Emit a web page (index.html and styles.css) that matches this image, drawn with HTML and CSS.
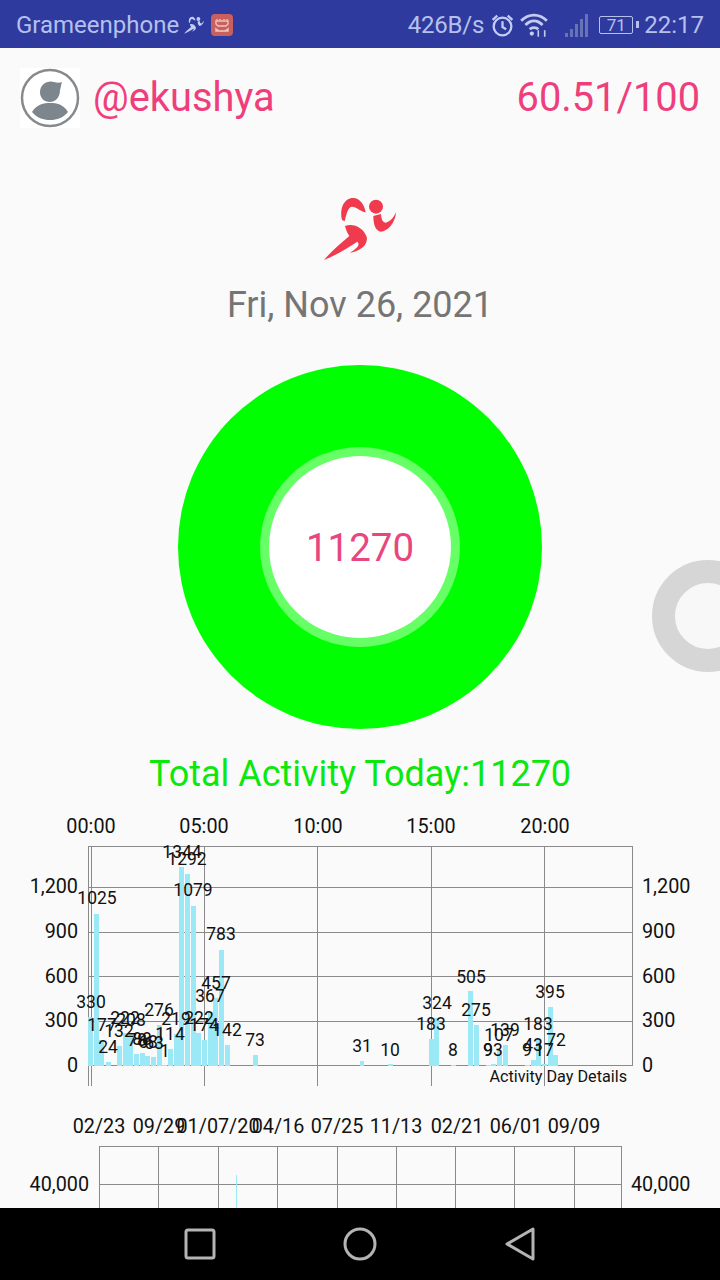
FILE: index.html
```html
<!DOCTYPE html>
<html lang="en">
<head>
<meta charset="utf-8">
<title>Activity</title>
<link rel="stylesheet" href="styles.css">
</head>
<body>
<div class="phone">
  <header class="statusbar">
    <div class="status-left">
      <span>Grameenphone</span>
      <svg class="ic-run" viewBox="60 45 240 200"><path d="M126 120C118 85 132 54 160 54C180 54 194 76 197 97C180 94 170 80 156 80C145 81 140 98 134 124Z"/><circle cx="228" cy="80" r="21"/><path d="M220 108L243 102C244 118 248 128 258 128C270 125 282 112 288 97C287 125 265 155 242 155C225 152 220 130 220 108Z"/><path d="M135 138C158 128 190 142 200 170C205 192 185 212 150 218C170 205 182 195 172 185C140 205 105 228 72 240C95 212 125 188 148 168C142 160 138 150 135 138Z"/></svg>
      <svg class="ic-app" viewBox="0 0 22 22"><rect width="22" height="22" rx="4" fill="#c9605f"/><path d="M6 5v1M9 5v1M13 5v1M16 5v1M5 7h12v3l-2 2H7L5 10zM5 15c3 3 9 3 12 0v2H5z" fill="none" stroke="#f0c4bd" stroke-width="1.4"/></svg>
    </div>
    <div class="status-right">
      <span class="speed">426B/s</span>
      <svg class="ic-alarm" viewBox="0 0 24 24"><circle cx="12" cy="13" r="8.500"/><path d="M12 8v5.500l3.500 2M2.500 6.500 7 2.500M21.500 6.500 17 2.500"/></svg>
      <svg class="ic-wifi" viewBox="0 0 28 24"><path d="M2 8C9 1 19 1 26 8M6 12C11 7 17 7 22 12M10 16C12 14 16 14 18 16"/><circle cx="12" cy="20" r="2" class="fill"/><path d="M18 17v6M24 17v6" class="thin"/></svg>
      <svg class="ic-signal" viewBox="0 0 26 26"><rect x="1" y="21" width="3" height="4"/><rect x="6" y="17" width="3" height="8"/><rect x="11" y="12" width="3" height="13"/><rect x="16" y="7" width="3" height="18"/><rect x="21" y="2" width="3" height="23"/></svg>
      <span class="battery"><span class="battery-level">71</span></span>
      <span>22:17</span>
    </div>
  </header>

  <main class="screen">
    <section class="profile">
      <div class="user">
        <svg class="avatar" viewBox="0 0 60 60"><rect width="60" height="60" fill="#fff"/><circle cx="30" cy="30" r="28" fill="none" stroke="#868a8d" stroke-width="2.500"/><path d="M20 24C20 16 28 12 34 14C37 15 40 15 42 14C41 17 41 19 40 22C40 30 35 34 30 34C24 34 20 30 20 24ZM12 44C17 36 24 35 30 35C37 35 43 36 48 44C43 50 37 52 30 52C23 52 17 50 12 44Z" fill="#7d868c"/></svg>
        <span class="handle">@ekushya</span>
      </div>
      <span class="score">60.51/100</span>
    </section>

    <svg class="runner" viewBox="0 0 360 270"><path d="M126 120C118 85 132 54 160 54C180 54 194 76 197 97C180 94 170 80 156 80C145 81 140 98 134 124Z"/><circle cx="228" cy="80" r="21"/><path d="M220 108L243 102C244 118 248 128 258 128C270 125 282 112 288 97C287 125 265 155 242 155C225 152 220 130 220 108Z"/><path d="M135 138C158 128 190 142 200 170C205 192 185 212 150 218C170 205 182 195 172 185C140 205 105 228 72 240C95 212 125 188 148 168C142 160 138 150 135 138Z"/></svg>

    <p class="date">Fri, Nov 26, 2021</p>

    <div class="ring-outer">
      <div class="ring-mid">
        <div class="ring-inner">11270</div>
      </div>
    </div>

    <p class="total">Total Activity Today:11270</p>

    <svg class="chart" viewBox="0 0 720 280" width="720" height="280">
      <g class="grid">
        <path d="M88 36.500H632M88 77.500H632M88 122.500H632M88 166.500H632M88 211.500H632M88 255.500H632"/>
        <path d="M88.500 36V276M91.500 36V276M204.500 36V276M317.500 36V276M431.500 36V276M544.500 36V276M632.500 36V256"/>
      </g>
      <g class="bars">
        <rect x="88" y="207" width="5" height="49"/>
        <rect x="94" y="104" width="5" height="152"/>
        <rect x="99" y="230" width="5" height="26"/>
        <rect x="106" y="252" width="5" height="4"/>
        <rect x="117" y="236" width="5" height="20"/>
        <rect x="123" y="223" width="5" height="33"/>
        <rect x="128" y="225" width="5" height="31"/>
        <rect x="134" y="244" width="5" height="12"/>
        <rect x="140" y="243" width="5" height="13"/>
        <rect x="145" y="246" width="5" height="10"/>
        <rect x="151" y="247" width="5" height="9"/>
        <rect x="157" y="215" width="5" height="41"/>
        <rect x="162" y="255" width="5" height="1"/>
        <rect x="168" y="239" width="5" height="17"/>
        <rect x="174" y="224" width="5" height="32"/>
        <rect x="179" y="57" width="5" height="199"/>
        <rect x="185" y="64" width="5" height="192"/>
        <rect x="191" y="96" width="5" height="160"/>
        <rect x="196" y="223" width="5" height="33"/>
        <rect x="202" y="230" width="5" height="26"/>
        <rect x="208" y="202" width="5" height="54"/>
        <rect x="213" y="188" width="5" height="68"/>
        <rect x="219" y="140" width="5" height="116"/>
        <rect x="225" y="235" width="5" height="21"/>
        <rect x="253" y="245" width="5" height="11"/>
        <rect x="360" y="251" width="4" height="5"/>
        <rect x="388" y="254" width="5" height="2"/>
        <rect x="429" y="229" width="5" height="27"/>
        <rect x="434" y="208" width="5" height="48"/>
        <rect x="451" y="255" width="5" height="1"/>
        <rect x="468" y="181" width="5" height="75"/>
        <rect x="474" y="215" width="5" height="41"/>
        <rect x="486" y="255" width="5" height="1"/>
        <rect x="491" y="254" width="5" height="2"/>
        <rect x="497" y="240" width="5" height="16"/>
        <rect x="503" y="235" width="5" height="21"/>
        <rect x="525" y="255" width="5" height="1"/>
        <rect x="531" y="250" width="5" height="6"/>
        <rect x="536" y="229" width="5" height="27"/>
        <rect x="542" y="254" width="5" height="2"/>
        <rect x="548" y="197" width="5" height="59"/>
        <rect x="553" y="245" width="5" height="11"/>
      </g>
      <g class="val">
        <text x="91" y="198">330</text><text x="97" y="94">1025</text><text x="102" y="221">177</text><text x="108" y="243">24</text><text x="119" y="227">132</text><text x="125" y="214">222</text><text x="131" y="216">208</text><text x="137" y="236">78</text><text x="142" y="235">88</text><text x="148" y="238">68</text><text x="154" y="239">63</text><text x="159" y="206">276</text><text x="165" y="247">1</text><text x="170" y="230">114</text><text x="176" y="215">219</text><text x="182" y="48">1344</text><text x="187" y="55">1292</text><text x="193" y="86">1079</text><text x="199" y="214">222</text><text x="204" y="221">174</text><text x="210" y="192">367</text><text x="216" y="179">457</text><text x="221" y="130">783</text><text x="227" y="226">142</text><text x="255" y="236">73</text><text x="362" y="242">31</text><text x="390" y="246">10</text><text x="431" y="220">183</text><text x="437" y="199">324</text><text x="453" y="246">8</text><text x="471" y="173">505</text><text x="476" y="206">275</text><text x="488" y="246">9</text><text x="493" y="246">93</text><text x="499" y="231">107</text><text x="505" y="226">139</text><text x="527" y="246">9</text><text x="533" y="241">43</text><text x="538" y="220">183</text><text x="544" y="246">17</text><text x="550" y="188">395</text><text x="556" y="236">72</text>
      </g>
      <g class="axis-mid">
        <text x="91" y="23">00:00</text><text x="204" y="23">05:00</text><text x="318" y="23">10:00</text><text x="431" y="23">15:00</text><text x="545" y="23">20:00</text>
      </g>
      <g class="axis-end">
        <text x="78" y="83">1,200</text><text x="78" y="128">900</text><text x="78" y="173">600</text><text x="78" y="217">300</text><text x="78" y="262">0</text>
      </g>
      <g class="axis-start">
        <text x="642" y="83">1,200</text><text x="642" y="128">900</text><text x="642" y="173">600</text><text x="642" y="217">300</text><text x="642" y="262">0</text>
      </g>
      <text class="caption" x="627" y="272">Activity Day Details</text>
    </svg>

    <svg class="chart chart-second" viewBox="0 0 720 118" width="720" height="118">
      <g class="grid">
        <path d="M99 56.500H622M99 94.500H622"/>
        <path d="M99.500 56V118M158.500 56V118M218.500 56V118M277.500 56V118M337.500 56V118M396.500 56V118M455.500 56V118M514.500 56V118M574.500 56V118M621.500 56V118"/>
      </g>
      <rect class="thin-bar" x="236" y="85" width="1" height="33"/>
      <g class="axis-mid">
        <text x="99" y="43">02/23</text><text x="159" y="43">09/29</text><text x="218" y="43">01/07/20</text><text x="278" y="43">04/16</text><text x="337" y="43">07/25</text><text x="396" y="43">11/13</text><text x="457" y="43">02/21</text><text x="516" y="43">06/01</text><text x="574" y="43">09/09</text>
      </g>
      <g class="axis-end">
        <text x="89" y="101">40,000</text>
      </g>
      <g class="axis-start">
        <text x="631" y="101">40,000</text>
      </g>
    </svg>

    <div class="side-handle"></div>
  </main>

  <nav class="navbar">
    <svg class="nav-ic" viewBox="0 0 36 36"><rect x="4" y="4" width="28" height="28" rx="2"/></svg>
    <svg class="nav-ic" viewBox="0 0 36 36"><circle cx="18" cy="18" r="15"/></svg>
    <svg class="nav-ic" viewBox="0 0 36 36"><path d="M31 3V33L5 18Z"/></svg>
  </nav>
</div>
</body>
</html>
```

FILE: styles.css
```css
* { box-sizing: border-box; }
html, body { margin: 0; padding: 0; }
body { font-family: Roboto, "Noto Sans", sans-serif; background: #fafafa; }
.phone { width: 720px; height: 1280px; display: flex; flex-direction: column; overflow: hidden; }

.statusbar { height: 48px; flex: none; background: #2f3a9f; color: #b6c0ec; font-size: 24px; display: flex; align-items: center; justify-content: space-between; padding: 2px 16px 0; }
.status-left, .status-right { display: flex; align-items: center; }
.ic-run { width: 22px; height: 20px; margin-left: 4px; fill: #c3cdf2; }
.ic-app { width: 22px; height: 22px; margin-left: 6px; }
.speed { margin-right: 6px; letter-spacing: -0.2px; }
.ic-alarm { width: 25px; height: 25px; fill: none; stroke: #c3cdf2; stroke-width: 2.200; }
.ic-wifi { width: 30px; height: 26px; margin-left: 4px; fill: none; stroke: #c3cdf2; stroke-width: 2.600; }
.ic-wifi .fill { fill: #c3cdf2; stroke: none; }
.ic-wifi .thin { stroke-width: 1.500; }
.ic-signal { width: 26px; height: 26px; margin-left: 15px; fill: #6872b6; }
.battery { width: 34px; height: 18px; margin-left: 9px; margin-right: 11px; border: 1.500px solid #b6c0ec; border-radius: 2px; display: flex; align-items: center; justify-content: center; position: relative; }
.battery::after { content: ""; position: absolute; right: -7px; top: 4px; width: 3px; height: 7px; background: #b6c0ec; }
.battery-level { font-size: 17px; }

.screen { flex: 1; min-height: 0; position: relative; overflow: hidden; display: flex; flex-direction: column; align-items: center; }
.profile { width: 100%; flex: none; display: flex; align-items: center; justify-content: space-between; padding: 20px 20px 0; color: #ee3f7c; font-size: 39.800px; line-height: 60px; }
.user { display: flex; align-items: center; gap: 13px; }
.avatar { width: 60px; height: 60px; }
.runner { width: 120px; height: 90px; margin-top: 52px; flex: none; fill: #ef3b4d; }
.date { margin: 12px 0 0; font-size: 36px; line-height: 46px; color: #757575; }
.ring-outer { margin-top: 37px; width: 364px; height: 364px; flex: none; border-radius: 50%; background: #00ff00; display: flex; align-items: center; justify-content: center; }
.ring-mid { width: 200px; height: 200px; border-radius: 50%; background: #66ff66; display: flex; align-items: center; justify-content: center; }
.ring-inner { width: 182px; height: 182px; border-radius: 50%; background: #fff; display: flex; align-items: center; justify-content: center; color: #e8467f; font-size: 38.500px; }
.total { margin: 22px 0 0; font-size: 36px; line-height: 46px; color: #0be80b; }

.chart { flex: none; display: block; margin-top: 13px; }
.chart-second { margin-top: 0; }
.grid path { fill: none; stroke: #8a8a8a; stroke-width: 1; shape-rendering: crispEdges; }
.bars rect { fill: #9be8f7; }
.thin-bar { fill: #9be8f7; }
.val text { font-size: 17.500px; text-anchor: middle; fill: #111; }
.axis-mid text { font-size: 19.800px; text-anchor: middle; fill: #111; }
.axis-end text { font-size: 19.800px; text-anchor: end; fill: #111; }
.axis-start text { font-size: 19.800px; text-anchor: start; fill: #111; }
.caption { font-size: 16.200px; text-anchor: end; fill: #111; }

.side-handle { position: absolute; left: 652px; top: 512px; width: 112px; height: 112px; border-radius: 50%; border: 23.500px solid #d6d6d6; background: #f8f8f8; }

.navbar { height: 72px; flex: none; background: #000; display: flex; align-items: center; justify-content: center; gap: 124px; }
.nav-ic { width: 36px; height: 36px; fill: none; stroke: #b4b4b4; stroke-width: 3; stroke-linejoin: round; }
```
